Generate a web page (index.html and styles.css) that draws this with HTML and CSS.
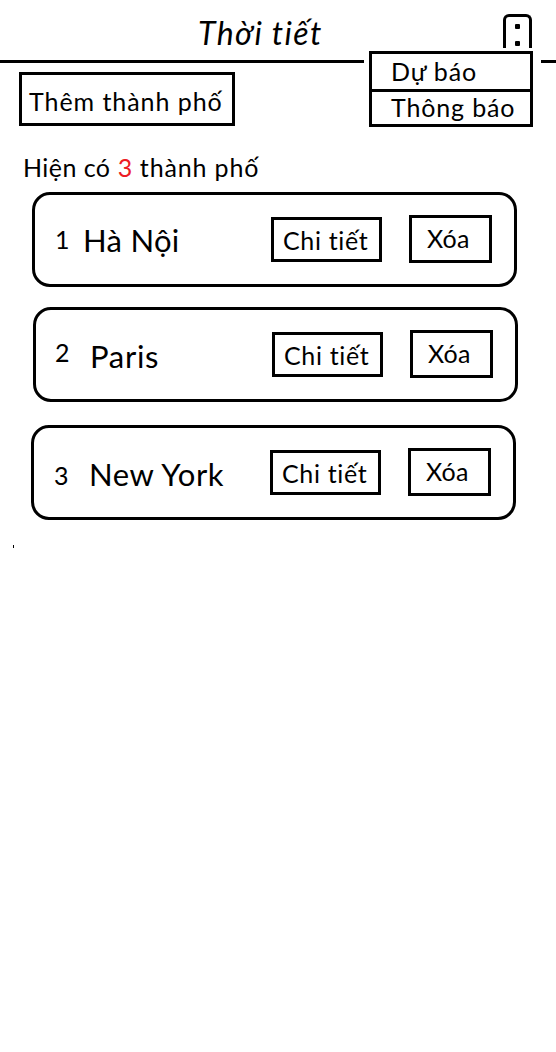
FILE: index.html
```html
<!DOCTYPE html>
<html lang="vi">
<head>
<meta charset="utf-8">
<title>Thời tiết</title>
<link rel="stylesheet" href="styles.css">
</head>
<body>
<header class="header">
  <h1 class="title">Thời tiết</h1>
  <button class="more" aria-label="Menu"><span class="dot"></span><span class="dot"></span></button>
  <nav class="menu-wrap">
    <div class="menu">
      <a class="menu-item">Dự báo</a>
      <a class="menu-item">Thông báo</a>
    </div>
  </nav>
</header>
<main class="content">
  <button class="box add">Thêm thành phố</button>
  <p class="count"><span class="count-lead">Hiện có</span> <span class="total">3</span> thành phố</p>
  <section class="cities">
    <article class="card hanoi">
      <span class="number">1</span><span class="name">Hà Nội</span>
      <button class="box detail">Chi tiết</button><button class="box remove">Xóa</button>
    </article>
    <article class="card paris">
      <span class="number">2</span><span class="name">Paris</span>
      <button class="box detail">Chi tiết</button><button class="box remove">Xóa</button>
    </article>
    <article class="card newyork">
      <span class="number">3</span><span class="name">New York</span>
      <button class="box detail">Chi tiết</button><button class="box remove">Xóa</button>
    </article>
  </section>
  <div class="tick"></div>
</main>
</body>
</html>
```
FILE: styles.css
```css
* { box-sizing: border-box; }
body {
  margin: 0;
  min-height: 1052px;
  background: #fff;
  color: #000;
  font: 25px/30px Lato, "Noto Sans", sans-serif;
  font-variant-ligatures: none;
  white-space: nowrap;
}
button {
  margin: 0;
  padding: 0;
  background: #fff;
  color: inherit;
  font: inherit;
  font-variant-ligatures: none;
  text-align: left;
}
.header {
  position: relative;
  height: 63px;
  border-bottom: 3px solid #000;
}
.title {
  margin: 0;
  padding: 14px 0 0 198px;
  font-size: 32px;
  font-weight: 400;
  font-style: italic;
  line-height: 38px;
  letter-spacing: 1.4px;
}
.more {
  position: absolute;
  top: 14px;
  left: 503px;
  width: 29px;
  height: 34px;
  padding: 7px 0 0 9px;
  border: 3px solid #000;
  border-bottom: 0;
  border-radius: 6px 6px 0 0;
  display: flex;
  flex-direction: column;
  gap: 12px;
}
.dot { width: 5px; height: 5px; border-radius: 1px; background: #000; }
.menu-wrap {
  position: absolute;
  top: 51px;
  left: 364px;
  width: 177px;
  padding: 0 8px 0 5px;
  background: #fff;
}
.menu { border: 3px solid #000; height: 76px; letter-spacing: 0.85px; }
.menu-item { display: block; height: 32px; padding-left: 19px; }
.menu-item:first-child { height: 38px; padding-top: 2px; border-bottom: 3px solid #000; }
.box { display: block; border: 3px solid #000; }
.content { padding-top: 9px; }
.add { width: 216px; height: 54px; margin-left: 19px; padding: 4px 0 0 7px; letter-spacing: 0.95px; }
.count { margin: 26px 0 0 23px; height: 40px; letter-spacing: 0.85px; }
.count-lead { letter-spacing: 0.45px; }
.total { color: #ed1c24; letter-spacing: 0.3px; }
.card {
  width: 485px;
  height: 95px;
  border: 3px solid #000;
  border-radius: 18px;
  display: grid;
  grid-template-columns: 27px 189px 138px 83px;
  padding-left: 20px;
  align-items: start;
}
.hanoi { margin: 0 0 20px 32px; }
.paris { margin: 0 0 23px 33px; }
.newyork { margin: 0 0 25px 31px; }
.number { padding-top: 29px; }
.name { font-size: 31px; line-height: 38px; padding: 26px 0 0 1px; letter-spacing: 0.3px; }
.paris .number { padding-top: 27px; margin-left: -1px; }
.paris .name { padding: 27px 0 0 7px; letter-spacing: 0.7px; }
.newyork .number { padding-top: 32px; }
.newyork .name { padding: 27px 0 0 8px; letter-spacing: 0.6px; }
.detail { width: 111px; height: 45px; margin-top: 22px; padding: 1px 0 0 9px; letter-spacing: 0.65px; }
.remove { width: 83px; height: 48px; margin-top: 20px; padding: 0 0 2px 15px; letter-spacing: 0.3px; }
.tick { width: 1px; height: 3px; margin-left: 13px; background: #000; }
```
